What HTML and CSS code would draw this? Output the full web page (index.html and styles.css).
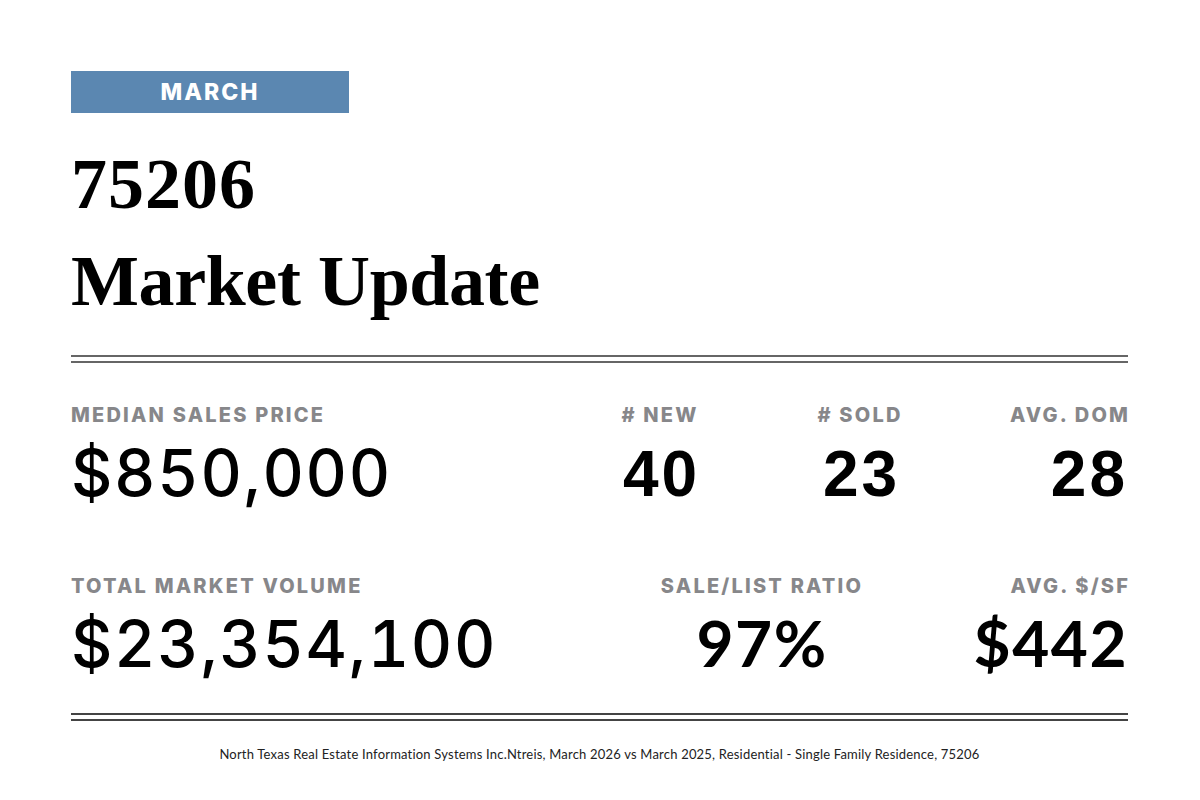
FILE: index.html
```html
<!DOCTYPE html>
<html>
<head>
<meta charset="utf-8">
<link rel="stylesheet" href="styles.css">
</head>
<body>
<div class="page">
  <div class="month">MARCH</div>
  <h1 class="title"><span class="zip">75206</span><br>Market Update</h1>
  <div class="rule"></div>
  <div class="stats row1">
    <div class="label left">MEDIAN SALES PRICE</div>
    <div class="label center">#&nbsp;NEW</div>
    <div class="label center">#&nbsp;SOLD</div>
    <div class="label right">AVG. DOM</div>
    <div class="value wide left">$850,000</div>
    <div class="value count center">40</div>
    <div class="value count center">23</div>
    <div class="value count right">28</div>
  </div>
  <div class="stats row2">
    <div class="label left">TOTAL MARKET VOLUME</div>
    <div class="label center">SALE/LIST RATIO</div>
    <div class="label right">AVG. $/SF</div>
    <div class="value wide left">$23,354,100</div>
    <div class="value bold center">97%</div>
    <div class="value bold right">$442</div>
  </div>
  <div class="rule bottom"></div>
  <p class="source">North Texas Real Estate Information Systems Inc.Ntreis, March 2026 vs March 2025, Residential - Single Family Residence, 75206</p>
</div>
</body>
</html>
```

FILE: styles.css
```css
html, body {
  margin: 0;
  padding: 0;
  background: #ffffff;
}

.page {
  width: 1200px;
  height: 800px;
  box-sizing: border-box;
  padding: 71px 72px 0 71px;
  font-family: "Lato", "Liberation Sans", sans-serif;
  color: #000;
}

.month {
  width: 278px;
  height: 42px;
  background: #5b87b1;
  color: #fff;
  font-family: "Inter", "Lato", sans-serif;
  font-weight: 800;
  font-size: 23px;
  letter-spacing: 2px;
  line-height: 42px;
  text-align: center;
}

.title {
  margin: 23px 0 0 0;
  font-family: "Liberation Serif", "DejaVu Serif", serif;
  font-weight: 700;
  font-size: 72px;
  line-height: 97px;
  letter-spacing: -0.4px;
  color: #000;
}

.zip {
  letter-spacing: 1px;
}

.rule {
  margin-top: 25px;
  height: 4px;
  border-top: 2px solid #666;
  border-bottom: 2px solid #666;
}

.rule.bottom {
  margin-top: 34px;
  border-color: #444;
}

.stats {
  display: grid;
  align-items: baseline;
  row-gap: 11px;
}

.row1 {
  margin-top: 40px;
  grid-template-columns: 1fr 200px 200px 168px;
}

.row2 {
  margin-top: 65px;
  row-gap: 10px;
  grid-template-columns: 1fr 240px 246px;
}

.label {
  font-family: "Inter", "Lato", sans-serif;
  font-weight: 800;
  font-size: 20px;
  line-height: 24px;
  letter-spacing: 2.2px;
  white-space: nowrap;
  color: #87878a;
}

.label.right {
  margin-right: -2.2px;
}

.value {
  font-size: 64px;
  line-height: 70px;
  white-space: nowrap;
  color: #000;
}

.value.wide {
  font-family: "Inter", "Lato", sans-serif;
  font-weight: 500;
  letter-spacing: 1.7px;
  font-variant-numeric: tabular-nums;
}

.value.count {
  font-family: "Liberation Sans", Arial, sans-serif;
  font-weight: 700;
  font-size: 64px;
  letter-spacing: 3px;
}

.value.center.count { padding-left: 3px; }

.value.bold {
  font-family: "Lato", sans-serif;
  font-weight: 700;
  letter-spacing: 1.5px;
}

.left { text-align: left; }
.center { text-align: center; }
.right { text-align: right; }

.source {
  margin: 26px 0 0 0;
  font-family: "Lato", sans-serif;
  font-size: 13px;
  line-height: 15px;
  letter-spacing: 0.2px;
  text-align: center;
  color: #222;
}
```
